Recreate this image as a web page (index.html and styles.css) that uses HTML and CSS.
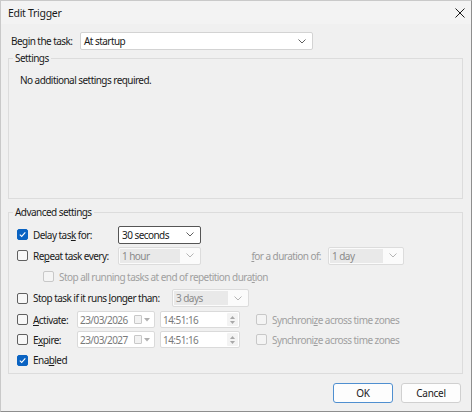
FILE: index.html
```html
<!DOCTYPE html>
<html>
<head>
<meta charset="utf-8">
<link rel="stylesheet" href="styles.css">
</head>
<body>
<div class="window">
  <div class="titlebar">
    <span class="title">Edit Trigger</span>
    <svg class="close" width="10" height="10" viewBox="0 0 10 10"><path d="M0.5 0.5L9.5 9.5M9.5 0.5L0.5 9.5" stroke="#1a1a1a" stroke-width="1"/></svg>
  </div>

  <div class="begin-row">
    <span class="begin-label">Be<u>g</u>in the task:</span>
    <div class="combo combo-begin"><span class="combo-text">At startup</span><svg class="chev" width="8" height="5" viewBox="0 0 8 5"><path d="M0.5 0.5L4 4L7.5 0.5" fill="none" stroke="#5f5f5f" stroke-width="1"/></svg></div>
  </div>

  <fieldset class="group group-settings">
    <legend>Settings</legend>
    <div class="note">No additional settings required.</div>
  </fieldset>

  <fieldset class="group group-advanced">
    <legend>Advanced settings</legend>

    <div class="row row-1">
      <span class="cb checked"><svg width="9" height="9" viewBox="0 0 9 9"><path d="M1.8 4.6L3.7 6.4L7.3 2.4" fill="none" stroke="#fff" stroke-width="1.1"/></svg></span>
      <span class="lbl w-delay">Delay tas<u>k</u> for:</span>
      <div class="combo combo-delay focused"><span class="combo-text">30 seconds</span><svg class="chev" width="8" height="5" viewBox="0 0 8 5"><path d="M0.5 0.5L4 4L7.5 0.5" fill="none" stroke="#5f5f5f" stroke-width="1"/></svg></div>
    </div>

    <div class="row row-2">
      <span class="cb"></span>
      <span class="lbl w-delay">Re<u>p</u>eat task every:</span>
      <div class="combo combo-delay disabled"><span class="combo-text">1 hour</span><svg class="chev" width="8" height="5" viewBox="0 0 8 5"><path d="M0.5 0.5L4 4L7.5 0.5" fill="none" stroke="#b5b5b5" stroke-width="1"/></svg></div>
      <span class="dur-label"><u>f</u>or a duration of:</span>
      <div class="combo combo-dur disabled"><span class="combo-text">1 day</span><svg class="chev" width="8" height="5" viewBox="0 0 8 5"><path d="M0.5 0.5L4 4L7.5 0.5" fill="none" stroke="#b5b5b5" stroke-width="1"/></svg></div>
    </div>

    <div class="row row-3">
      <span class="cb cb-disabled indent"></span>
      <span class="lbl dim">Stop all running tasks at end of repetition dura<u>t</u>ion</span>
    </div>

    <div class="row row-4">
      <span class="cb"></span>
      <span class="lbl w-stop">Stop task if it runs <u>l</u>onger than:</span>
      <div class="combo combo-stop disabled"><span class="combo-text">3 days</span><svg class="chev" width="8" height="5" viewBox="0 0 8 5"><path d="M0.5 0.5L4 4L7.5 0.5" fill="none" stroke="#b5b5b5" stroke-width="1"/></svg></div>
    </div>

    <div class="row row-5">
      <span class="cb"></span>
      <span class="lbl w-date"><u>A</u>ctivate:</span>
      <div class="field date"><span class="ftext">23/03/2026</span><span class="cal"></span><svg class="tri" width="6" height="4" viewBox="0 0 6 4"><path d="M0 0H6L3 3.5Z" fill="#b0b0b0"/></svg></div>
      <div class="field time"><span class="ftext">14:51:16</span><span class="spin"><svg width="5" height="3" viewBox="0 0 5 3"><path d="M0 3H5L2.5 0Z" fill="#a8a8a8"/></svg><svg width="5" height="3" viewBox="0 0 5 3"><path d="M0 0H5L2.5 3Z" fill="#a8a8a8"/></svg></span></div>
      <span class="cb cb-disabled sync"></span>
      <span class="lbl dim">Synchroni<u>z</u>e across time zones</span>
    </div>

    <div class="row row-6">
      <span class="cb"></span>
      <span class="lbl w-date">E<u>x</u>pire:</span>
      <div class="field date"><span class="ftext">23/03/2027</span><span class="cal"></span><svg class="tri" width="6" height="4" viewBox="0 0 6 4"><path d="M0 0H6L3 3.5Z" fill="#b0b0b0"/></svg></div>
      <div class="field time"><span class="ftext">14:51:16</span><span class="spin"><svg width="5" height="3" viewBox="0 0 5 3"><path d="M0 3H5L2.5 0Z" fill="#a8a8a8"/></svg><svg width="5" height="3" viewBox="0 0 5 3"><path d="M0 0H5L2.5 3Z" fill="#a8a8a8"/></svg></span></div>
      <span class="cb cb-disabled sync"></span>
      <span class="lbl dim">Synchroni<u>z</u>e across time zones</span>
    </div>

    <div class="row row-7">
      <span class="cb checked"><svg width="9" height="9" viewBox="0 0 9 9"><path d="M1.8 4.6L3.7 6.4L7.3 2.4" fill="none" stroke="#fff" stroke-width="1.1"/></svg></span>
      <span class="lbl">Ena<u>b</u>led</span>
    </div>
  </fieldset>

  <div class="buttons">
    <button class="btn btn-default">OK</button>
    <button class="btn">Cancel</button>
  </div>
</div>
</body>
</html>
```

FILE: styles.css
```css
html, body {
  margin: 0;
  padding: 0;
  background: #f0f0f0;
}
body {
  font-family: "Noto Sans", "DejaVu Sans", sans-serif;
  font-size: 10px;
  letter-spacing: -0.55px;
  color: #1a1a1a;
  white-space: nowrap;
}
u { text-decoration: underline; text-underline-offset: 1px; }

.window {
  box-sizing: border-box;
  width: 472px;
  height: 412px;
  background: #f0f0f0;
  border: 1px solid #8e8e8e;
  border-left-color: #c9c9c9;
  border-top-color: #c9c9c9;
  display: flex;
  flex-direction: column;
}

.titlebar {
  height: 23px;
  display: flex;
  align-items: center;
  justify-content: space-between;
  padding: 0 6px 0 7px;
  background: #f3f3f3;
}
.title { font-size: 10.5px; letter-spacing: -0.3px; color: #1a1a1a; }
.close { display: block; }

.begin-row {
  display: flex;
  align-items: center;
  height: 18px;
  margin-top: 8px;
  padding-left: 10px;
}
.begin-label { width: 69px; flex: none; }

.combo {
  box-sizing: border-box;
  height: 18px;
  background: #fff;
  border: 1px solid #d3d3d3;
  border-radius: 2px;
  display: flex;
  align-items: center;
  justify-content: space-between;
  padding: 0 6px 0 3px;
  flex: none;
}
.combo-begin { width: 233px; }
.combo-delay { width: 83px; }
.combo-dur { width: 76px; }
.combo-stop { width: 77px; }
.combo.focused { border-color: #555; }
.combo.disabled {
  background: #fbfbfb;
  border-color: #dcdcdc;
  padding-left: 1px;
}
.combo.disabled .combo-text {
  background: #e9e9e9;
  color: #8a8a8a;
  flex: 1;
  align-self: stretch;
  display: flex;
  align-items: center;
  padding-left: 2px;
  margin: 1px 6px 1px 0;
}
.chev { display: block; flex: none; }

.group {
  margin: 1px 8px 0 7px;
  border: 1px solid #dcdcdc;
  padding: 0 8px;
  min-width: 0;
}
.group legend {
  padding: 0 2px;
  margin-left: -4px;
  line-height: 14px;
}
.group-settings { height: 148px; box-sizing: border-box; }
.note { padding: 8px 0 0 3px; }

.group-advanced {
  margin-top: 6px;
  height: 169px;
  box-sizing: border-box;
  padding-top: 1px;
}

.row {
  display: flex;
  align-items: center;
}
.row-1 { height: 21px; margin-top: 4px; }
.row-2 { height: 21px; }
.row-3 { height: 21px; }
.row-4 { height: 22px; }
.row-5 { height: 21px; }
.row-6 { height: 19px; }
.row-7 { height: 22px; }

.cb {
  box-sizing: border-box;
  width: 11px;
  height: 11px;
  border: 1px solid #606060;
  border-radius: 2px;
  background: #f7f7f7;
  flex: none;
  margin-right: 5px;
  display: flex;
  align-items: center;
  justify-content: center;
}
.cb.checked { background: #0a63c2; border-color: #0a63c2; }
.cb.checked svg { display: block; }
.cb-disabled { border-color: #c8c8c8; background: #f4f4f4; }
.cb.indent { margin-left: 26px; }
.cb.sync { margin-left: 16px; }

.lbl { white-space: nowrap; flex: none; }
.dim { color: #a0a0a0; }
.w-delay { width: 85px; }
.w-stop { width: 139px; }
.w-date { width: 44px; }

.dur-label {
  width: 127px;
  flex: none;
  box-sizing: border-box;
  text-align: right;
  padding-right: 7px;
  color: #9a9a9a;
}

.field {
  box-sizing: border-box;
  height: 17px;
  background: #fff;
  border: 1px solid #dadada;
  border-radius: 2px;
  display: flex;
  align-items: center;
  color: #7a7a7a;
  padding-left: 2px;
  flex: none;
}
.field.date { width: 78px; margin-right: 5px; }
.field.time { width: 80px; }
.ftext { flex: 1; }
.cal {
  width: 6px;
  height: 7px;
  border: 1px solid #c8c8c8;
  border-radius: 1px;
  background: #f2f2f2;
  margin-right: 2px;
}
.tri { display: block; margin-right: 4px; }
.spin {
  align-self: stretch;
  width: 11px;
  margin: 1px;
  background: #f3f3f3;
  border-radius: 1px;
  display: flex;
  flex-direction: column;
  align-items: center;
  justify-content: center;
  gap: 2px;
}
.spin svg { display: block; }

.buttons {
  display: flex;
  justify-content: flex-end;
  gap: 8px;
  margin-top: 9px;
  padding-right: 10px;
}
.btn {
  box-sizing: border-box;
  width: 60px;
  height: 20px;
  font-family: inherit;
  font-size: 10px;
  letter-spacing: -0.3px;
  color: #1a1a1a;
  background: #fdfdfd;
  border: 1px solid #d0d0d0;
  border-radius: 3px;
  padding: 0;
}
.btn-default { border-color: #4f8fd0; }
```
